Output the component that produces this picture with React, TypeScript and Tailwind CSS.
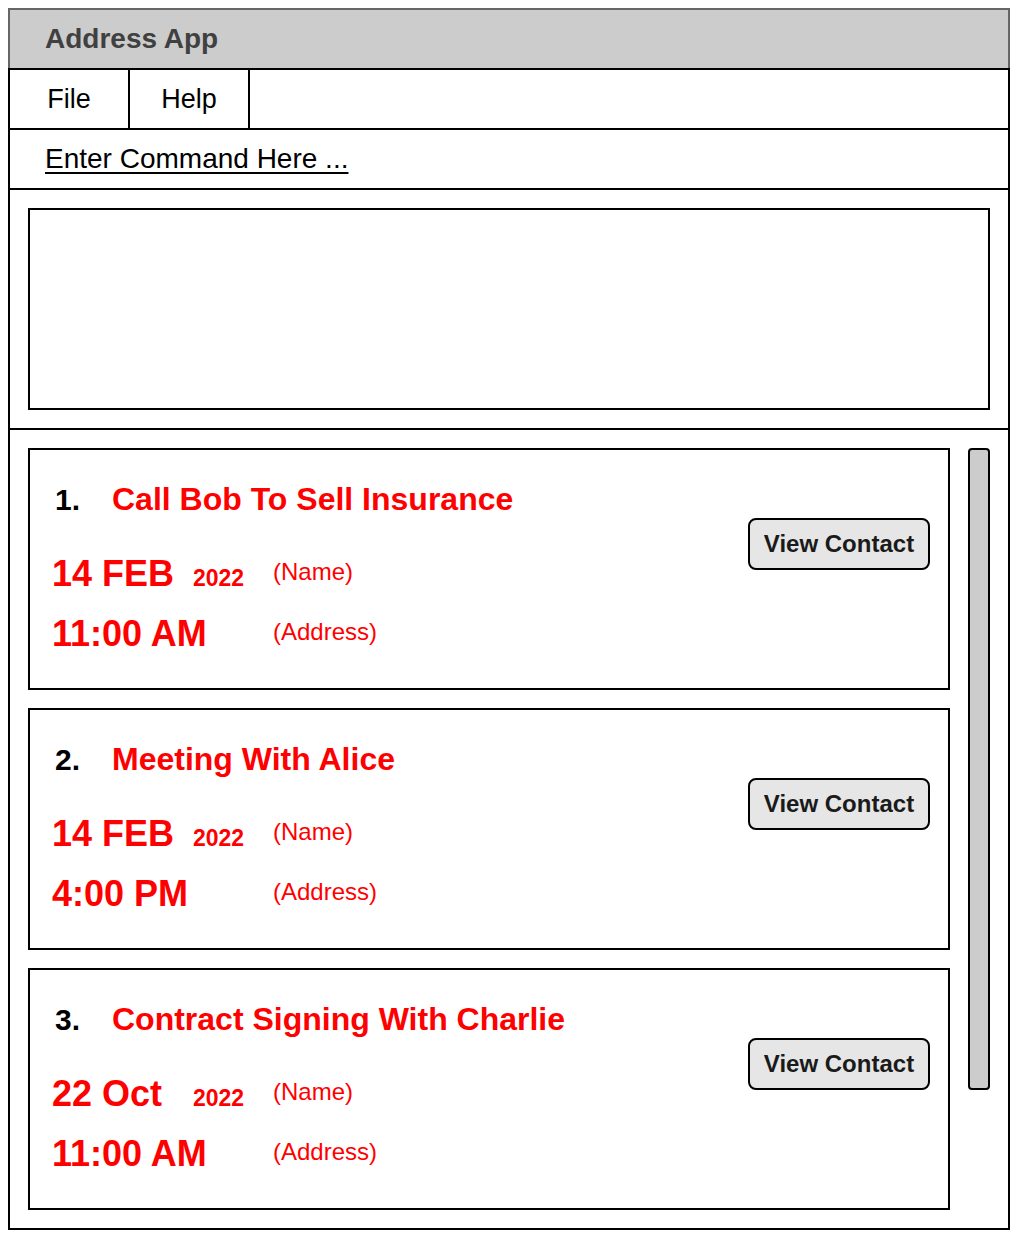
import React from "react";

const items = [
  { n: "1.", title: "Call Bob To Sell Insurance", date: "14 FEB", time: "11:00 AM" },
  { n: "2.", title: "Meeting With Alice", date: "14 FEB", time: "4:00 PM" },
  { n: "3.", title: "Contract Signing With Charlie", date: "22 Oct", time: "11:00 AM" },
];

function Card({ n, title, date, time }: { n: string; title: string; date: string; time: string }) {
  return (
    <div className="w-[922px] h-[242px] border-2 border-black flex justify-between">
      <div className="pl-[22px] pt-[19px] flex flex-col">
        <div className="h-[60px] flex items-baseline leading-[60px] whitespace-nowrap">
          <span className="ml-[3px] w-[57px] text-[30px] font-bold text-black">{n}</span>
          <span className="text-[32px] font-bold text-[#ff0000]">{title}</span>
        </div>
        <div className="mt-[15px] h-[60px] flex items-baseline leading-[60px] whitespace-nowrap">
          <span className="w-[141px] text-[36px] font-bold text-[#ff0000]">{date}</span>
          <span className="w-[80px] text-[23px] font-bold text-[#ff0000]">2022</span>
          <span className="relative -top-[6px] text-[24px] text-[#ff0000]">(Name)</span>
        </div>
        <div className="h-[60px] flex items-baseline leading-[60px] whitespace-nowrap">
          <span className="w-[221px] text-[36px] font-bold text-[#ff0000]">{time}</span>
          <span className="relative -top-[6px] text-[24px] text-[#ff0000]">(Address)</span>
        </div>
      </div>
      <div className="pt-[68px] pr-[18px]">
        <button className="w-[182px] h-[52px] border-2 border-black rounded-[8px] bg-[#e6e6e6] text-[24px] font-bold text-[#1a1a1a] flex items-center justify-center">
          View Contact
        </button>
      </div>
    </div>
  );
}

export default function App() {
  return (
    <div
      className="bg-white w-[1018px] h-[1238px] pt-[8px] pl-[8px]"
      style={{ fontFamily: '"Liberation Sans", Arial, sans-serif' }}
    >
      <div className="w-[1002px] flex flex-col">
        <div className="h-[60px] border-t-2 border-x-2 border-[#666666] bg-[#cccccc] flex items-center pl-[35px] text-[28px] font-bold text-[#404040]">
          Address App
        </div>
        <div className="border-2 border-black flex flex-col">
          <div className="h-[60px] border-b-2 border-black flex">
            <div className="w-[120px] h-full border-r-2 border-black flex items-center justify-center text-[27px] text-black">File</div>
            <div className="w-[120px] h-full border-r-2 border-black flex items-center justify-center text-[27px] text-black">Help</div>
          </div>
          <div className="h-[60px] border-b-2 border-black flex items-center pl-[35px] text-[28px] text-black">
            <span className="underline underline-offset-[4px] decoration-[2px]">Enter Command Here ...</span>
          </div>
          <div className="h-[240px] border-b-2 border-black p-[18px]">
            <div className="h-[202px] border-2 border-black" />
          </div>
          <div className="p-[18px] flex gap-[18px] items-start">
            <div className="flex flex-col gap-[18px]">
              {items.map((it) => (
                <Card key={it.n} {...it} />
              ))}
            </div>
            <div className="w-[22px] h-[642px] border-2 border-black rounded-[4px] bg-[#cccccc]" />
          </div>
        </div>
      </div>
    </div>
  );
}
